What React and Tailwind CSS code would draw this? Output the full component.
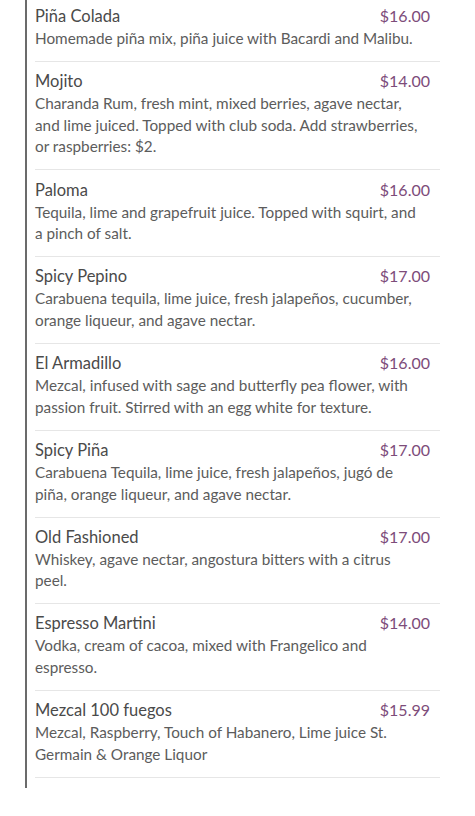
const drinks = [
  {
    name: "Piña Colada",
    price: "$16.00",
    desc: "Homemade piña mix, piña juice with Bacardi and Malibu.",
  },
  {
    name: "Mojito",
    price: "$14.00",
    desc: "Charanda Rum, fresh mint, mixed berries, agave nectar, and lime juiced. Topped with club soda. Add strawberries, or raspberries: $2.",
  },
  {
    name: "Paloma",
    price: "$16.00",
    desc: "Tequila, lime and grapefruit juice. Topped with squirt, and a pinch of salt.",
  },
  {
    name: "Spicy Pepino",
    price: "$17.00",
    desc: "Carabuena tequila, lime juice, fresh jalapeños, cucumber, orange liqueur, and agave nectar.",
  },
  {
    name: "El Armadillo",
    price: "$16.00",
    desc: "Mezcal, infused with sage and butterfly pea flower, with passion fruit. Stirred with an egg white for texture.",
  },
  {
    name: "Spicy Piña",
    price: "$17.00",
    desc: "Carabuena Tequila, lime juice, fresh jalapeños, jugó de piña, orange liqueur, and agave nectar.",
  },
  {
    name: "Old Fashioned",
    price: "$17.00",
    desc: "Whiskey, agave nectar, angostura bitters with a citrus peel.",
  },
  {
    name: "Espresso Martini",
    price: "$14.00",
    desc: "Vodka, cream of cacoa, mixed with Frangelico and espresso.",
  },
  {
    name: "Mezcal 100 fuegos",
    price: "$15.99",
    desc: "Mezcal, Raspberry, Touch of Habanero, Lime juice St. Germain & Orange Liquor",
  },
];

export default function App() {
  return (
    <div className="min-h-[816px] w-[475px] bg-white font-['Lato',sans-serif]">
      <div className="ml-[25px] w-[415px] border-l-2 border-[#6b6b6b] pb-[10px] pl-[8px]">
        {drinks.map((item, i) => (
          <div
            key={item.name}
            className={
              "border-b border-[#e6e6e6] pr-[10px] pb-[11.2px] " +
              (i === 0 ? "pt-[4px]" : "pt-[7.2px]")
            }
          >
            <div className="flex items-center justify-between leading-[24px]">
              <span className="text-[16.5px] text-[#4a4a4a]">{item.name}</span>
              <span className="text-[16px] text-[#7d4c7a]">{item.price}</span>
            </div>
            <p className="pr-[8px] text-[15.3px] leading-[21.7px] text-[#5c5c5c]">
              {item.desc}
            </p>
          </div>
        ))}
      </div>
    </div>
  );
}
